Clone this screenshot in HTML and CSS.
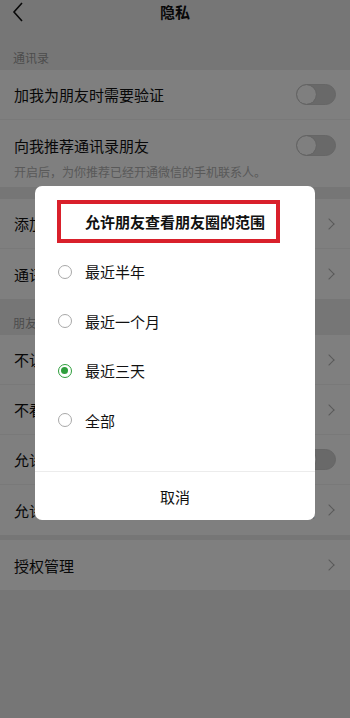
FILE: index.html
```html
<!DOCTYPE html>
<html lang="zh">
<head>
<meta charset="utf-8">
<link rel="stylesheet" href="styles.css">
</head>
<body>
<div class="page">
  <header class="topbar">
    <svg class="back" width="12" height="20" viewBox="0 0 12 20"><polyline points="10,1 2,10 10,19" fill="none" stroke="#111" stroke-width="1.6"/></svg>
    <div class="title">隐私</div>
  </header>

  <div class="section-label first">通讯录</div>
  <div class="group">
    <div class="row"><span class="label">加我为朋友时需要验证</span><span class="switch"><span class="knob"></span></span></div>
    <div class="row tall">
      <div class="row-main"><span class="label">向我推荐通讯录朋友</span><span class="switch"><span class="knob"></span></span></div>
      <div class="desc">开启后，为你推荐已经开通微信的手机联系人。</div>
    </div>
  </div>

  <div class="group gap">
    <div class="row"><span class="label">添加我的方式</span><span class="chev"></span></div>
    <div class="row"><span class="label">通讯录黑名单</span><span class="chev"></span></div>
  </div>

  <div class="section-label">朋友圈</div>
  <div class="group">
    <div class="row"><span class="label">不让他（她）看</span><span class="chev"></span></div>
    <div class="row"><span class="label">不看他（她）</span><span class="chev"></span></div>
    <div class="row"><span class="label">允许陌生人查看十条朋友圈</span><span class="switch"><span class="knob"></span></span></div>
    <div class="row"><span class="label">允许朋友查看朋友圈的范围</span><span class="right"><span class="value">最近三天</span><span class="chev"></span></span></div>
  </div>

  <div class="group gap-small">
    <div class="row"><span class="label">授权管理</span><span class="chev"></span></div>
  </div>
</div>

<div class="mask"></div>

<div class="dialog">
  <div class="dialog-title">允许朋友查看朋友圈的范围</div>
  <div class="mark"></div>
  <div class="options">
    <div class="option"><span class="radio"></span><span>最近半年</span></div>
    <div class="option"><span class="radio"></span><span>最近一个月</span></div>
    <div class="option"><span class="radio on"></span><span>最近三天</span></div>
    <div class="option"><span class="radio"></span><span>全部</span></div>
  </div>
  <div class="dialog-foot">取消</div>
</div>
</body>
</html>
```

FILE: styles.css
```css
* { box-sizing: border-box; }
html, body {
  margin: 0;
  padding: 0;
  background: #ededed;
  font-family: "Noto Sans CJK SC", "Noto Sans", sans-serif;
  color: #111;
}
.page {
  width: 350px;
  min-height: 718px;
  background: #ededed;
}
.topbar {
  height: 40px;
  display: flex;
  justify-content: center;
  align-items: flex-start;
  padding-top: 1px;
  background: #ededed;
  position: relative;
}
.back {
  position: absolute;
  left: 12px;
  top: 2px;
}
.title {
  font-size: 15px;
  line-height: 22px;
  font-weight: 700;
}
.section-label {
  font-size: 12px;
  line-height: 16px;
  color: #999;
  padding: 16px 13px 4px;
}
.section-label.first {
  padding-top: 10px;
  padding-bottom: 4px;
}
.group {
  background: #fff;
}
.group.gap { margin-top: 12px; }
.group.gap-small { margin-top: 5px; }
.row {
  height: 50px;
  padding: 0 14px;
  display: flex;
  align-items: center;
  justify-content: space-between;
  font-size: 15px;
  border-bottom: 1px solid #f2f2f2;
}
.row:last-child { border-bottom: none; }
.row.tall {
  height: 67px;
  flex-direction: column;
  align-items: stretch;
  justify-content: flex-start;
  padding-top: 12px;
}
.row-main {
  display: flex;
  align-items: center;
  justify-content: space-between;
  height: 26px;
}
.desc {
  font-size: 12px;
  line-height: 18px;
  color: #b2b2b2;
  margin-top: 5px;
}
.switch {
  width: 40px;
  height: 21px;
  border-radius: 11px;
  background: #d2d2d2;
  border: 1px solid #cccccc;
  position: relative;
  flex: none;
}
.knob {
  position: absolute;
  left: 0;
  top: 0;
  width: 19px;
  height: 19px;
  border-radius: 50%;
  background: #fff;
  box-shadow: 0 0 1px rgba(0,0,0,0.3);
}
.chev {
  width: 8px;
  height: 8px;
  border-top: 1.5px solid #b2b2b2;
  border-right: 1.5px solid #b2b2b2;
  transform: rotate(45deg);
  margin-right: 3px;
  flex: none;
}
.right {
  display: flex;
  align-items: center;
  gap: 10px;
}
.value {
  color: #b2b2b2;
  font-size: 15px;
}
.mask {
  position: fixed;
  inset: 0;
  background: rgba(0,0,0,0.5);
}
.dialog {
  position: fixed;
  left: 35px;
  top: 186px;
  width: 280px;
  height: 334px;
  background: #fff;
  border-radius: 7px;
  display: flex;
  flex-direction: column;
}
.dialog-title {
  text-align: center;
  font-size: 15px;
  font-weight: 700;
  line-height: 20px;
  padding: 26px 0 15px;
}
.mark {
  position: absolute;
  left: 22px;
  top: 14px;
  width: 223px;
  height: 43px;
  border: 4px solid #d9202b;
}
.options {
  flex: 1;
}
.option {
  height: 49.5px;
  display: flex;
  align-items: center;
  padding-left: 23px;
  font-size: 15px;
  gap: 13px;
}
.radio {
  width: 14px;
  height: 14px;
  border-radius: 50%;
  border: 1px solid #a8a8a8;
  flex: none;
  position: relative;
}
.radio.on {
  border: 1.5px solid #2e9e3c;
}
.radio.on::after {
  content: "";
  position: absolute;
  left: 2px;
  top: 2px;
  width: 7px;
  height: 7px;
  border-radius: 50%;
  background: #2e9e3c;
}
.dialog-foot {
  height: 49px;
  border-top: 1px solid #ececec;
  display: flex;
  align-items: center;
  justify-content: center;
  font-size: 15px;
}
```
